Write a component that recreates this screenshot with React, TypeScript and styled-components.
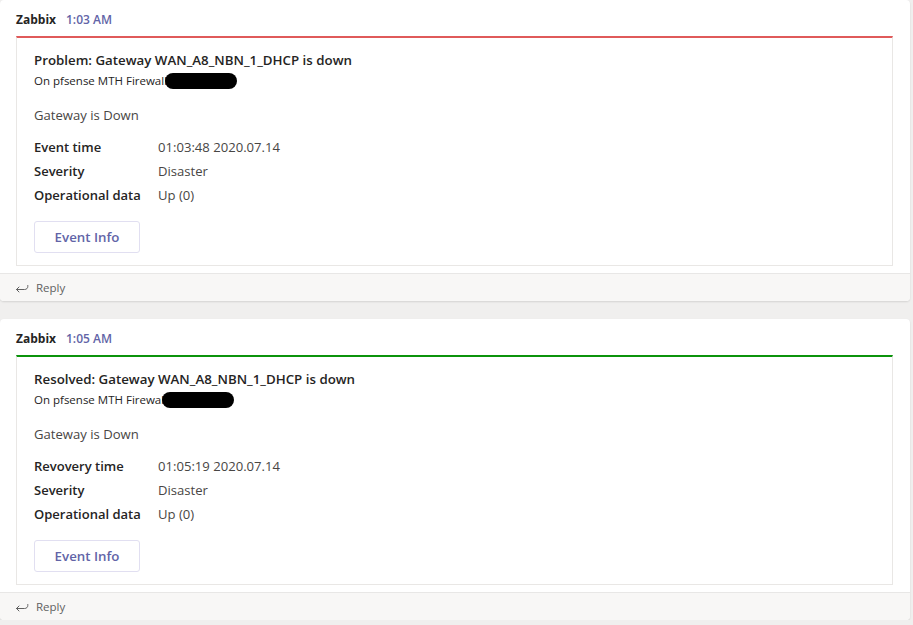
import React from 'react';
import styled, { createGlobalStyle } from 'styled-components';

const GlobalStyle = createGlobalStyle`
  html, body {
    margin: 0;
    padding: 0;
    background: #f0efee;
  }
  body {
    font-family: 'Open Sans', 'Noto Sans', sans-serif;
    color: #252423;
  }
`;

const Feed = styled.div`
  width: 910px;
  display: flex;
  flex-direction: column;
  gap: 18px;
`;

const Message = styled.div`
  background: #ffffff;
  border-radius: 4px;
  box-shadow: 0 1px 2px rgba(0, 0, 0, 0.12);
  overflow: hidden;
`;

const MessageBody = styled.div`
  padding: 12px 17px 7px 16px;
`;

const Header = styled.div`
  display: flex;
  align-items: baseline;
  gap: 10px;
  font-size: 12px;
  line-height: 16px;
  margin-bottom: 8px;
`;

const Sender = styled.span`
  font-weight: 700;
  color: #252423;
`;

const Time = styled.span`
  font-weight: 600;
  color: #6264a7;
`;

const Card = styled.div<{ $accent: string }>`
  border: 1px solid #e9e7e5;
  border-top: 2px solid ${props => props.$accent};
  padding: 12px 17px 12px 17px;
  display: flex;
  flex-direction: column;
`;

const Title = styled.div`
  font-size: 13.3px;
  line-height: 20px;
  font-weight: 600;
  color: #252423;
`;

const Subtitle = styled.div`
  display: flex;
  align-items: center;
  font-size: 11.5px;
  line-height: 16px;
  color: #252423;
  margin-top: 3px;
`;

const Redaction = styled.span`
  display: inline-block;
  width: 72px;
  height: 16px;
  border-radius: 8px;
  background: #000000;
  margin-left: -2px;
`;

const Description = styled.div`
  font-size: 13.1px;
  line-height: 20px;
  color: #484644;
  margin-top: 16px;
`;

const Facts = styled.div`
  display: grid;
  grid-template-columns: 124px auto;
  row-gap: 4px;
  margin-top: 12px;
  font-size: 13.1px;
  line-height: 20px;
`;

const FactLabel = styled.div`
  font-weight: 600;
  font-size: 13px;
  color: #252423;
`;

const FactValue = styled.div`
  color: #484644;
`;

const ActionButton = styled.button`
  align-self: flex-start;
  margin-top: 16px;
  width: 106px;
  height: 32px;
  border: 1px solid #e1dff1;
  border-radius: 3px;
  background: #ffffff;
  color: #6264a7;
  font-family: inherit;
  font-size: 13.3px;
  font-weight: 600;
  cursor: pointer;
`;

const ReplyBar = styled.div`
  display: flex;
  align-items: center;
  gap: 7px;
  height: 26px;
  padding: 0 0 1px 15px;
  background: #f8f7f6;
  border-top: 1px solid #e8e7e6;
  font-size: 11.5px;
  color: #616161;
`;

const ReplyIcon = () => (
  <svg width="14" height="12" viewBox="0 0 14 12" fill="none" stroke="#616161" strokeWidth="1" strokeLinecap="round" strokeLinejoin="round">
    <path d="M1.5 8.5 H9.5 C11.5 8.5 12.8 7.2 12.8 5.4 V4.5" />
    <path d="M4 6 L1.5 8.5 L4 11" />
  </svg>
);

interface Alert {
  time: string;
  accent: string;
  title: string;
  firewall: string;
  timeLabel: string;
  timeValue: string;
}

const alerts: Alert[] = [
  {
    time: '1:03 AM',
    accent: '#e05a5a',
    title: 'Problem: Gateway WAN_A8_NBN_1_DHCP is down',
    firewall: 'On pfsense MTH Firewall',
    timeLabel: 'Event time',
    timeValue: '01:03:48 2020.07.14',
  },
  {
    time: '1:05 AM',
    accent: '#0b930b',
    title: 'Resolved: Gateway WAN_A8_NBN_1_DHCP is down',
    firewall: 'On pfsense MTH Firewal',
    timeLabel: 'Revovery time',
    timeValue: '01:05:19 2020.07.14',
  },
];

export default function App() {
  return (
    <>
      <GlobalStyle />
      <Feed>
        {alerts.map(alert => (
          <Message key={alert.time}>
            <MessageBody>
              <Header>
                <Sender>Zabbix</Sender>
                <Time>{alert.time}</Time>
              </Header>
              <Card $accent={alert.accent}>
                <Title>{alert.title}</Title>
                <Subtitle>
                  {alert.firewall}
                  <Redaction />
                </Subtitle>
                <Description>Gateway is Down</Description>
                <Facts>
                  <FactLabel>{alert.timeLabel}</FactLabel>
                  <FactValue>{alert.timeValue}</FactValue>
                  <FactLabel>Severity</FactLabel>
                  <FactValue>Disaster</FactValue>
                  <FactLabel>Operational data</FactLabel>
                  <FactValue>Up (0)</FactValue>
                </Facts>
                <ActionButton>Event Info</ActionButton>
              </Card>
            </MessageBody>
            <ReplyBar>
              <ReplyIcon />
              Reply
            </ReplyBar>
          </Message>
        ))}
      </Feed>
    </>
  );
}
